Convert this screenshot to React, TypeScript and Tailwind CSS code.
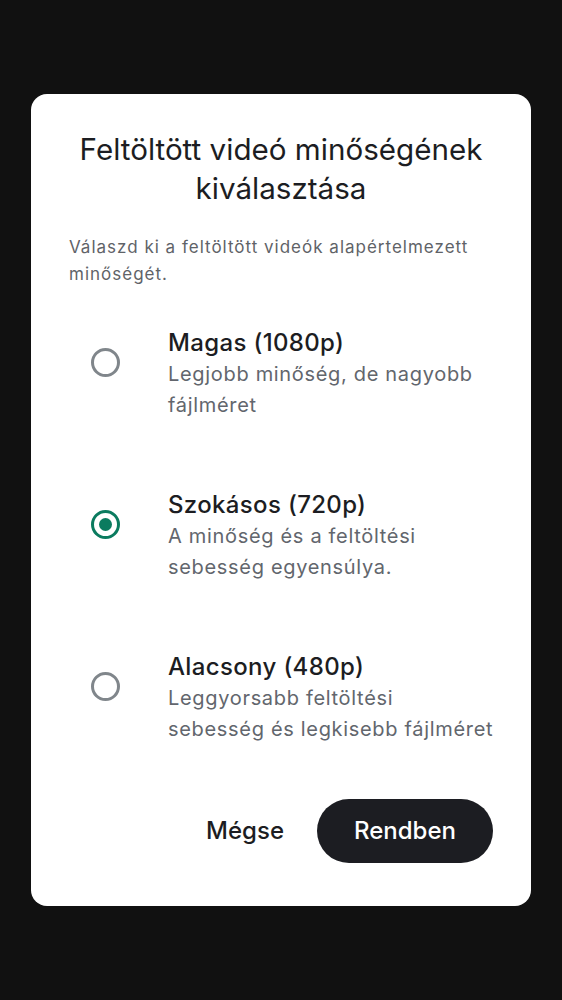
import React, { useState } from "react";

const options = [
  { id: "high", title: "Magas (1080p)", desc: ["Legjobb minőség, de nagyobb", "fájlméret"] },
  { id: "normal", title: "Szokásos (720p)", desc: ["A minőség és a feltöltési", "sebesség egyensúlya."] },
  { id: "low", title: "Alacsony (480p)", desc: ["Leggyorsabb feltöltési", "sebesség és legkisebb fájlméret"] },
];

export default function App() {
  const [sel, setSel] = useState("normal");
  return (
    <div
      className="min-h-screen w-full bg-[#111111] flex items-center justify-center px-[31px]"
      style={{ fontFamily: "Inter, Roboto, sans-serif" }}
    >
      <div className="w-full bg-white rounded-[16px] px-[38px] pt-[36px] pb-[43px] flex flex-col">
        <h1 className="text-center text-[29.6px] leading-[39px] text-[#1c1d22] font-normal">
          Feltöltött videó minőségének
          <br />
          kiválasztása
        </h1>
        <p className="mt-[26px] text-[17px] leading-[27px] tracking-[1px] text-[#5f6368]">
          Válaszd ki a feltöltött videók alapértelmezett
          <br />
          minőségét.
        </p>
        <div className="mt-[38px] flex flex-col gap-[67px]">
          {options.map((o) => {
            const active = sel === o.id;
            return (
              <button
                key={o.id}
                onClick={() => setSel(o.id)}
                className="flex items-start text-left pl-[22px]"
              >
                <span
                  className={
                    "mt-[22px] w-[29px] h-[29px] shrink-0 rounded-full border-[3px] flex items-center justify-center " +
                    (active ? "border-[#0b7b5f]" : "border-[#80868b]")
                  }
                >
                  {active && <span className="w-[13px] h-[13px] rounded-full bg-[#0b7b5f]" />}
                </span>
                <span className="ml-[48px] flex flex-col">
                  <span className="text-[24px] leading-[33px] font-medium tracking-[0.35px] text-[#1c1d22]">
                    {o.title}
                  </span>
                  <span className="text-[20px] leading-[31px] tracking-[0.68px] text-[#62666d] whitespace-nowrap">
                    {o.desc[0]}
                    <br />
                    {o.desc[1]}
                  </span>
                </span>
              </button>
            );
          })}
        </div>
        <div className="mt-[54px] flex items-center justify-end gap-[33px]">
          <button className="text-[24px] font-medium text-[#1c1d22]">Mégse</button>
          <button className="w-[176px] h-[64px] rounded-full bg-[#1c1d22] text-white text-[24px] font-medium">
            Rendben
          </button>
        </div>
      </div>
    </div>
  );
}
